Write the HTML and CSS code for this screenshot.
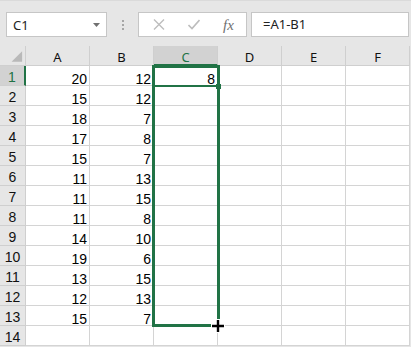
FILE: index.html
```html
<!DOCTYPE html>
<html lang="en">
<head>
    <meta charset="UTF-8">
    <title>Sheet</title>
    <link rel="stylesheet" href="styles.css">
</head>
<body>
    <div class="formula-bar">
        <div class="name-box">
            <span>C1</span>
            <svg class="caret" width="7" height="4" viewBox="0 0 7 4"><polygon points="0,0 7,0 3.5,4" fill="#707070"/></svg>
        </div>
        <div class="bar-sep"><i></i><i></i><i></i></div>
        <div class="func-box">
            <span class="func-icon">
                <svg width="12" height="11" viewBox="0 0 12 11"><path d="M1 0.5 L11 10.5 M11 0.5 L1 10.5" stroke="#bdbdbd" stroke-width="1.4" fill="none"/></svg>
            </span>
            <span class="func-icon">
                <svg width="12" height="11" viewBox="0 0 12 11"><path d="M0.5 6 L4 9.5 L11.5 1" stroke="#bdbdbd" stroke-width="1.6" fill="none"/></svg>
            </span>
            <span class="func-icon fx">fx</span>
        </div>
        <div class="formula-input">=A1-B1</div>
    </div>

    <div class="sheet">
        <div class="corner"><svg width="26" height="20" viewBox="0 0 26 20"><polygon points="23,5 23,16 12,16" fill="#b9b9b9"/></svg></div>
        <div class="col-head">A</div><div class="col-head">B</div><div class="col-head active">C</div><div class="col-head">D</div><div class="col-head">E</div><div class="col-head">F</div>

        <div class="row-head active">1</div><div class="cell">20</div><div class="cell">12</div><div class="cell">8</div><div class="cell"></div><div class="cell"></div><div class="cell"></div>
        <div class="row-head">2</div><div class="cell">15</div><div class="cell">12</div><div class="cell"></div><div class="cell"></div><div class="cell"></div><div class="cell"></div>
        <div class="row-head">3</div><div class="cell">18</div><div class="cell">7</div><div class="cell"></div><div class="cell"></div><div class="cell"></div><div class="cell"></div>
        <div class="row-head">4</div><div class="cell">17</div><div class="cell">8</div><div class="cell"></div><div class="cell"></div><div class="cell"></div><div class="cell"></div>
        <div class="row-head">5</div><div class="cell">15</div><div class="cell">7</div><div class="cell"></div><div class="cell"></div><div class="cell"></div><div class="cell"></div>
        <div class="row-head">6</div><div class="cell">11</div><div class="cell">13</div><div class="cell"></div><div class="cell"></div><div class="cell"></div><div class="cell"></div>
        <div class="row-head">7</div><div class="cell">11</div><div class="cell">15</div><div class="cell"></div><div class="cell"></div><div class="cell"></div><div class="cell"></div>
        <div class="row-head">8</div><div class="cell">11</div><div class="cell">8</div><div class="cell"></div><div class="cell"></div><div class="cell"></div><div class="cell"></div>
        <div class="row-head">9</div><div class="cell">14</div><div class="cell">10</div><div class="cell"></div><div class="cell"></div><div class="cell"></div><div class="cell"></div>
        <div class="row-head">10</div><div class="cell">19</div><div class="cell">6</div><div class="cell"></div><div class="cell"></div><div class="cell"></div><div class="cell"></div>
        <div class="row-head">11</div><div class="cell">13</div><div class="cell">15</div><div class="cell"></div><div class="cell"></div><div class="cell"></div><div class="cell"></div>
        <div class="row-head">12</div><div class="cell">12</div><div class="cell">13</div><div class="cell"></div><div class="cell"></div><div class="cell"></div><div class="cell"></div>
        <div class="row-head">13</div><div class="cell">15</div><div class="cell">7</div><div class="cell"></div><div class="cell"></div><div class="cell"></div><div class="cell"></div>
        <div class="row-head">14</div><div class="cell"></div><div class="cell"></div><div class="cell"></div><div class="cell"></div><div class="cell"></div><div class="cell"></div>

        <!-- fill range outline while dragging the handle -->
        <div class="selection"></div>
        <div class="active-line"></div>
        <div class="fill-handle"></div>
        <svg class="cursor" width="18" height="18" viewBox="0 0 18 18">
            <path d="M9 2 V16 M2 9 H16" stroke="#fff" stroke-width="5" fill="none"/>
            <path d="M9 3 V15 M3 9 H15" stroke="#000" stroke-width="2.4" fill="none"/>
        </svg>
    </div>
</body>
</html>
```

FILE: styles.css
```css
* {
    margin: 0;
    padding: 0;
    box-sizing: border-box;
}

body {
    background-color: #e6e6e6;
    font-family: "Noto Sans", "Open Sans", sans-serif;
    width: 411px;
    height: 347px;
    overflow: hidden;
}

.formula-bar {
    height: 46px;
    display: flex;
    align-items: flex-start;
    padding: 11px 0 0 6px;
    border-top: 1px solid #dadada;
}

.name-box {
    width: 101px;
    height: 25px;
    background: white;
    border: 1px solid #c6c6c6;
    display: flex;
    align-items: center;
    justify-content: space-between;
    padding: 0 6px 0 6px;
    font-size: 13px;
    color: #222;
}

.name-box span {
    line-height: 14px;
}

.bar-sep {
    width: 31px;
    height: 25px;
    display: flex;
    flex-direction: column;
    align-items: center;
    justify-content: center;
    gap: 2px;
}

.bar-sep i {
    display: block;
    width: 2px;
    height: 2px;
    background: #a6a6a6;
}

.func-box {
    width: 109px;
    height: 25px;
    background: white;
    border: 1px solid #c6c6c6;
    display: flex;
    align-items: center;
    padding-left: 2px;
    margin-right: 4px;
}

.func-icon {
    width: 36px;
    display: flex;
    align-items: center;
    justify-content: center;
}

.func-icon.fx {
    font-family: "Liberation Serif", serif;
    font-style: italic;
    font-size: 15px;
    color: #707070;
    line-height: 14px;
}

.formula-input {
    width: 158px;
    height: 25px;
    background: white;
    border: 1px solid #c6c6c6;
    font-size: 13px;
    color: #222;
    padding-left: 11px;
    line-height: 22px;
}

.sheet {
    position: relative;
    display: grid;
    grid-template-columns: 26px repeat(6, 64px);
    grid-auto-rows: 20px;
    width: 410px;
}

.corner,
.col-head,
.row-head {
    background: #e6e6e6;
    border-right: 1px solid #cfcfcf;
    border-bottom: 1px solid #cfcfcf;
    display: flex;
    align-items: center;
    justify-content: center;
    color: #111;
}

.corner {
    align-items: stretch;
    justify-content: stretch;
}

.col-head {
    font-size: 13px;
    padding-top: 3px;
}

.row-head {
    font-family: "Liberation Sans", Arial, sans-serif;
    font-size: 14px;
    padding-top: 2px;
}

.col-head.active {
    background: #d2d2d2;
    color: #217346;
    border-bottom: 2px solid #217346;
}

.row-head.active {
    background: #d2d2d2;
    color: #217346;
    border-right: 2px solid #217346;
}

.cell {
    background: white;
    border-right: 1px solid #d4d4d4;
    border-bottom: 1px solid #d4d4d4;
    font-family: "Liberation Sans", Arial, sans-serif;
    font-size: 14px;
    line-height: 12px;
    color: #000;
    display: flex;
    align-items: flex-end;
    justify-content: flex-end;
    padding-right: 2px;
}

.selection {
    position: absolute;
    left: 152px;
    top: 19px;
    width: 68px;
    height: 262px;
    border: 3px solid #217346;
}

.active-line {
    position: absolute;
    left: 154px;
    top: 39px;
    width: 62px;
    height: 2px;
    background: #217346;
}

.fill-handle {
    position: absolute;
    left: 216px;
    top: 38px;
    width: 5px;
    height: 5px;
    background: #217346;
}

.cursor {
    position: absolute;
    left: 209px;
    top: 271px;
}
```
